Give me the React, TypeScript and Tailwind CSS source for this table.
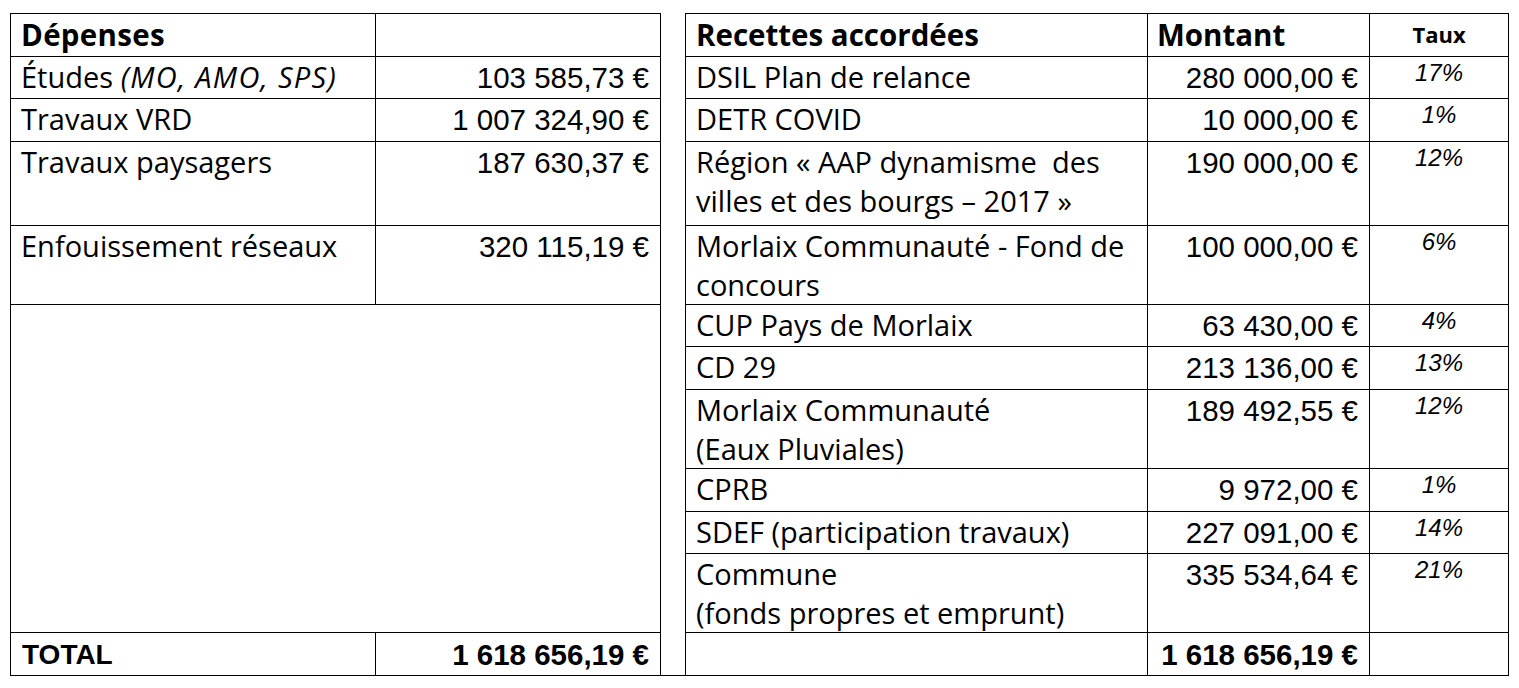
import React from "react";

type Row = {
  label: string[];
  amount: string;
  rate: string;
};

const depenses: { label: React.ReactNode; amount: string }[] = [
  {
    label: (
      <>
        Études <span className="italic tracking-[1.3px]">(MO, AMO, SPS)</span>
      </>
    ),
    amount: "103 585,73 €",
  },
  { label: "Travaux VRD", amount: "1 007 324,90 €" },
  { label: "Travaux paysagers", amount: "187 630,37 €" },
  { label: "Enfouissement réseaux", amount: "320 115,19 €" },
];

const recettes: Row[] = [
  { label: ["DSIL Plan de relance"], amount: "280 000,00 €", rate: "17%" },
  { label: ["DETR COVID"], amount: "10 000,00 €", rate: "1%" },
  {
    label: ["Région « AAP dynamisme  des", "villes et des bourgs – 2017 »"],
    amount: "190 000,00 €",
    rate: "12%",
  },
  {
    label: ["Morlaix Communauté - Fond de", "concours"],
    amount: "100 000,00 €",
    rate: "6%",
  },
  { label: ["CUP Pays de Morlaix"], amount: "63 430,00 €", rate: "4%" },
  { label: ["CD 29"], amount: "213 136,00 €", rate: "13%" },
  {
    label: ["Morlaix Communauté", "(Eaux Pluviales)"],
    amount: "189 492,55 €",
    rate: "12%",
  },
  { label: ["CPRB"], amount: "9 972,00 €", rate: "1%" },
  {
    label: ["SDEF (participation travaux)"],
    amount: "227 091,00 €",
    rate: "14%",
  },
  {
    label: ["Commune", "(fonds propres et emprunt)"],
    amount: "335 534,64 €",
    rate: "21%",
  },
];

const cell = "border-r border-b border-black";
const label =
  "font-['Open_Sans',sans-serif] text-[29px] leading-[39px] pl-[10px] whitespace-pre";
const amount =
  "font-['Liberation_Sans',Arial,sans-serif] text-[29.5px] leading-[39px] pr-[11px] pt-[1px] text-right whitespace-nowrap";
const rate =
  "font-['Liberation_Sans',Arial,sans-serif] italic text-[24px] leading-[32px] text-center";
const head =
  "font-['Open_Sans',sans-serif] font-bold text-[29.5px] leading-[39px] pt-[1px]";
const total =
  "font-['Liberation_Sans',Arial,sans-serif] font-bold text-[29.5px] leading-[39px] pr-[11px] pt-[2px] text-right";

const App = () => {
  const cells: React.ReactNode[] = [];

  recettes.forEach((r, i) => {
    if (i < depenses.length) {
      cells.push(
        <div key={`l${i}`} className={`${cell} border-l ${label}`}>
          {depenses[i].label}
        </div>,
        <div key={`a${i}`} className={`${cell} ${amount}`}>
          {depenses[i].amount}
        </div>
      );
    } else if (i === depenses.length) {
      cells.push(
        <div key="blank" className={`${cell} border-l col-span-2 row-span-6`} />
      );
    }
    cells.push(
      <div key={`rl${i}`} className={`${cell} ${label}`}>
        {r.label.map((line, j) => (
          <div key={j}>{line}</div>
        ))}
      </div>,
      <div key={`ra${i}`} className={`${cell} ${amount}`}>
        {r.amount}
      </div>,
      <div key={`rr${i}`} className={`${cell} ${rate}`}>
        {r.rate}
      </div>
    );
  });

  return (
    <div className="min-h-screen bg-white text-black">
      <div className="pl-[10px] pt-[13px]">
        <div className="grid grid-cols-[366px_285px_25px_462px_222px_139px] grid-rows-[44px_42px_43px_84px_79px_42px_43px_79px_43px_42px_79px_43px]">
          {/* header */}
          <div className={`${cell} border-l border-t ${head} pl-[10px] tracking-[0.3px]`}>
            Dépenses
          </div>
          <div className={`${cell} border-t`} />
          <div className={`${cell} row-span-12`} />
          <div className={`${cell} border-t ${head} pl-[10px]`}>
            Recettes accordées
          </div>
          <div className={`${cell} border-t ${head} pl-[9px]`}>Montant</div>
          <div
            className={`${cell} border-t font-['Open_Sans',sans-serif] font-bold text-[22px] leading-[39px] text-center pt-[1px]`}
          >
            Taux
          </div>

          {cells}

          {/* total */}
          <div
            className={`${cell} border-l font-['Liberation_Sans',Arial,sans-serif] font-bold text-[28px] leading-[39px] pl-[11px] pt-[2px]`}
          >
            TOTAL
          </div>
          <div className={`${cell} ${total}`}>1 618 656,19 €</div>
          <div className={cell} />
          <div className={`${cell} ${total}`}>1 618 656,19 €</div>
          <div className={cell} />
        </div>
      </div>
    </div>
  );
};

export default App;
